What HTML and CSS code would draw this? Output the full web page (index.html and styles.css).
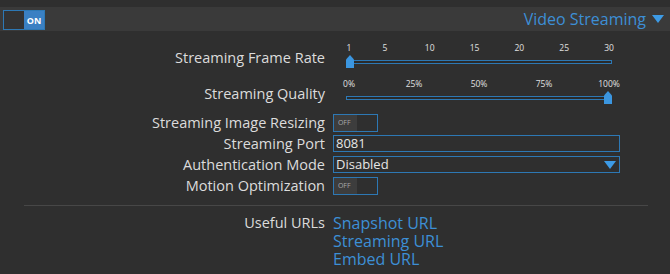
FILE: index.html
```html
<!DOCTYPE html>
<html lang="en">
<head>
<meta charset="UTF-8" />
<title>Video Streaming</title>
<link rel="stylesheet" href="styles.css">
</head>
<body>

<div class="section-header">
  <div class="switch on"><span class="switch-off"></span><span class="switch-on">ON</span></div>
  <div class="section-title">Video Streaming <span class="arrow-down"></span></div>
</div>

<div class="settings">
  <div class="row row-slider1">
    <div class="label">Streaming Frame Rate</div>
    <div class="value">
      <div class="slider">
        <div class="ticks">
          <span style="left:0%">1</span>
          <span style="left:13.79%">5</span>
          <span style="left:31.03%">10</span>
          <span style="left:48.28%">15</span>
          <span style="left:65.52%">20</span>
          <span style="left:82.76%">25</span>
          <span style="left:100%">30</span>
        </div>
        <div class="track"><span class="thumb" style="left:0%"></span></div>
      </div>
    </div>
  </div>

  <div class="row row-slider2">
    <div class="label">Streaming Quality</div>
    <div class="value">
      <div class="slider">
        <div class="ticks">
          <span style="left:0%">0%</span>
          <span style="left:25%">25%</span>
          <span style="left:50%">50%</span>
          <span style="left:75%">75%</span>
          <span style="left:100%">100%</span>
        </div>
        <div class="track"><span class="thumb thumb-end" style="left:100%"></span></div>
      </div>
    </div>
  </div>

  <div class="row row-field row-first">
    <div class="label">Streaming Image Resizing</div>
    <div class="value"><div class="switch off"><span class="switch-off">OFF</span><span class="switch-on"></span></div></div>
  </div>

  <div class="row row-field">
    <div class="label">Streaming Port</div>
    <div class="value"><div class="text-input">8081</div></div>
  </div>

  <div class="row row-field">
    <div class="label">Authentication Mode</div>
    <div class="value"><div class="text-input select">Disabled <span class="arrow-down small"></span></div></div>
  </div>

  <div class="row row-field">
    <div class="label">Motion Optimization</div>
    <div class="value"><div class="switch off"><span class="switch-off">OFF</span><span class="switch-on"></span></div></div>
  </div>

  <div class="separator"></div>

  <div class="row row-urls">
    <div class="label">Useful URLs</div>
    <div class="value links">
      <a href="#">Snapshot URL</a>
      <a href="#">Streaming URL</a>
      <a href="#">Embed URL</a>
    </div>
  </div>
</div>

</body>
</html>
```

FILE: styles.css
```css
/* Reset */
* {
  margin: 0; padding: 0; box-sizing: border-box;
}
html, body {
  height: 100%;
  background: #2f2f2f;
  font-family: 'Open Sans', 'DejaVu Sans', sans-serif;
  color: #dcdcdc;
  overflow: hidden;
}
body {
  padding-top: 7px;
}

/* section header bar */
.section-header {
  height: 24px;
  background: #3a3a3a;
  display: flex;
  align-items: center;
  justify-content: space-between;
  padding: 0 6px 0 3px;
}
.section-title {
  color: #3d8fd6;
  font-size: 16px;
  display: flex;
  align-items: center;
  gap: 6px;
}
.arrow-down {
  width: 0; height: 0;
  border-left: 6px solid transparent;
  border-right: 6px solid transparent;
  border-top: 8px solid #3d9be6;
}

/* on/off switch */
.switch {
  display: flex;
  border: 1px solid #2d78b4;
  font-size: 8px;
  font-weight: bold;
}
.switch.on {
  width: 42px;
  height: 20px;
  margin-top: 2px;
}
.switch.off {
  width: 45px;
  height: 18px;
}
.switch span {
  flex: 1;
  display: flex;
  align-items: center;
  justify-content: center;
}
.switch.on .switch-off { background: #333; }
.switch.on .switch-on { background: #3a80c3; color: #fff; font-size: 9px; }
.switch.off .switch-off { background: #3d3d3d; color: #aaa; font-weight: normal; font-size: 7px; padding-right: 2px; }
.switch.off .switch-on { background: #2f2f2f; }

/* settings table */
.settings {
  margin: 9px 22px 0 24px;
}
.row {
  display: flex;
}
.label {
  width: 301px;
  text-align: right;
  font-size: 14.5px;
  line-height: 18px;
  flex-shrink: 0;
  white-space: nowrap;
}
.value {
  margin-left: 8px;
  width: 287px;
}

.row-slider1 { height: 34px; padding-top: 9px; }
.row-slider1 .slider { margin-top: -6px; }
.row-slider2 { height: 30px; padding-top: 10px; margin-top: 1px; }
.row-slider2 .slider { margin-top: -6px; }

.row-field {
  height: 21px;
  align-items: center;
}
.row-first { margin-top: 7px; }

/* sliders */
.slider {
  margin-left: 13px;
  width: 266px;
}
.ticks {
  position: relative;
  height: 10px;
  margin: 0 3px;
  font-size: 8.5px;
  line-height: 10px;
  color: #e0e0e0;
}
.ticks span {
  position: absolute;
  top: 0;
  transform: translateX(-50%);
}
.track {
  position: relative;
  height: 4px;
  margin-top: 7px;
  border: 1px solid #2d78b4;
  background: #2a2a2a;
}
.thumb {
  position: absolute;
  top: -6px;
  width: 8px;
  height: 13px;
  margin-left: -1px;
  background: #3b96e0;
  clip-path: polygon(50% 0, 100% 35%, 100% 100%, 0 100%, 0 35%);
}
.thumb-end { margin-left: -7px; }

/* inputs */
.text-input {
  height: 17px;
  border: 1px solid #2d78b4;
  font-size: 13px;
  line-height: 15px;
  color: #e6e6e6;
  padding-left: 2px;
}
.text-input.select {
  display: flex;
  align-items: center;
  justify-content: space-between;
  padding-right: 3px;
}

.separator {
  height: 1px;
  background: #474747;
  margin: 9px 0 8px;
}

.links {
  display: flex;
  flex-direction: column;
}
.links a {
  display: block;
  height: 18px;
  color: #3d8fd6;
  text-decoration: none;
  font-size: 16px;
  line-height: 18px;
}
```
